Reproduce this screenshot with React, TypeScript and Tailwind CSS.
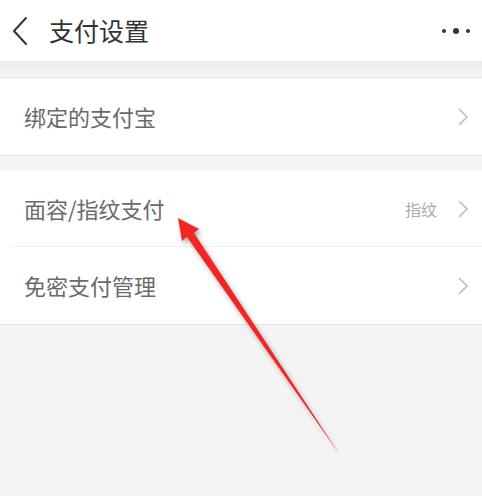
const font = { fontFamily: '"Noto Sans CJK SC", "Noto Sans", sans-serif' };

const Chevron = () => (
  <svg width="12" height="20" viewBox="0 0 12 20" className="ml-[20px]">
    <path d="M2 2 L10 10 L2 18" fill="none" stroke="#bdbdbd" strokeWidth="1.6" />
  </svg>
);

const BackIcon = () => (
  <svg width="18" height="30" viewBox="0 0 18 30">
    <path d="M15 2 L3 15 L15 28" fill="none" stroke="#333" strokeWidth="2" strokeLinecap="round" strokeLinejoin="round" />
  </svg>
);

const Row = ({ label, value, divider }: { label: string; value?: string; divider?: boolean }) => (
  <div className="relative flex h-[77px] items-center pl-[24px] pr-[13px]">
    <span className="flex-1 text-[22px] text-[#6a6a6a]">{label}</span>
    {value && <span className="text-[16px] text-[#aaaaaa]">{value}</span>}
    <Chevron />
    {divider && <div className="absolute bottom-0 left-[10px] right-0 h-px bg-[#f2f2f2]" />}
  </div>
);

const App = () => {
  return (
    <div className="relative h-[496px] w-[482px] overflow-hidden bg-[#f4f4f4]" style={font}>
      {/* Header */}
      <div className="flex h-[61px] items-center bg-white pl-[11px] pr-[12px]">
        <BackIcon />
        <span className="ml-[20px] text-[25px] text-[#333]">支付设置</span>
        <div className="ml-auto flex items-center gap-[7px]">
          <span className="h-[4px] w-[4px] rounded-full bg-[#333]" />
          <span className="h-[6px] w-[6px] rounded-full bg-[#333]" />
          <span className="h-[4px] w-[4px] rounded-full bg-[#333]" />
        </div>
      </div>
      <div className="h-[16px] bg-gradient-to-b from-[#ececec] to-[#f5f5f5]" />

      <div className="border-y border-[#e6e6e6] bg-white">
        <Row label="绑定的支付宝" />
      </div>
      <div className="h-[14px]" />
      <div className="border-b border-[#e6e6e6] bg-white">
        <Row label="面容/指纹支付" value="指纹" divider />
        <Row label="免密支付管理" />
      </div>

      {/* Annotation arrow */}
      <svg className="pointer-events-none absolute left-0 top-0" width="482" height="496" viewBox="0 0 482 496">
        <defs>
          <filter id="sh" x="-20%" y="-20%" width="140%" height="140%">
            <feDropShadow dx="2" dy="3" stdDeviation="2.5" floodColor="#000" floodOpacity="0.35" />
          </filter>
        </defs>
        <polygon
          points="178,218 199,229 194,233 340,455 187,237 182,241"
          fill="#f02828"
          filter="url(#sh)"
        />
      </svg>
    </div>
  );
};

export default App;
